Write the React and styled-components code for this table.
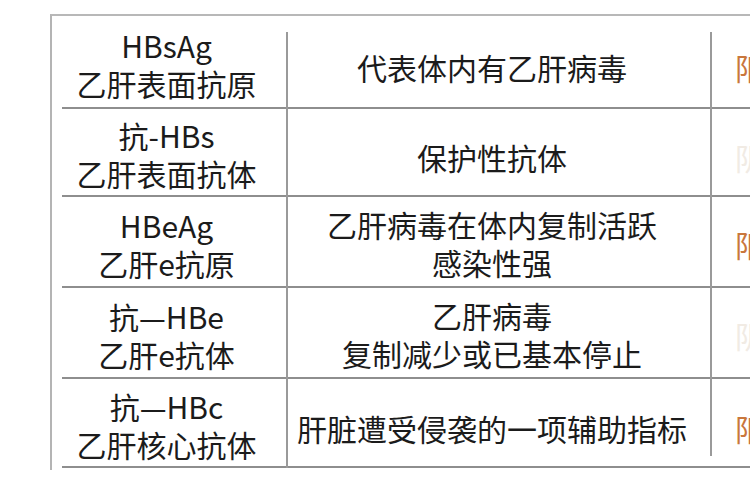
import React from "react";
import styled, { createGlobalStyle } from "styled-components";

const GlobalStyle = createGlobalStyle`
  html, body {
    margin: 0;
    padding: 0;
    background: #ffffff;
    overflow: hidden;
  }
  body {
    width: 750px;
    height: 500px;
  }
`;

const Page = styled.div`
  width: 750px;
  height: 500px;
  padding-top: 14px;
  box-sizing: border-box;
  overflow: hidden;
`;

const Frame = styled.div`
  margin-left: 50px;
  width: 760px;
  padding-left: 10px;
  border-left: 2px solid #b4b4b4;
  border-top: 2px solid #b8b8b8;
  padding-bottom: 2px;
  font-family: "Noto Sans CJK SC", "Noto Sans", sans-serif;
  color: #1b1b1b;
`;

const Table = styled.div`
  display: grid;
  grid-template-columns: 225px 424px 120px;
`;

const Cell = styled.div`
  position: relative;
  height: ${(p) => p.$h}px;
  box-sizing: border-box;
  border-bottom: 2px solid #8e8e8e;
  display: flex;
  flex-direction: column;
  align-items: center;
  justify-content: center;
  padding-top: ${(p) => p.$pt || 0}px;
  padding-right: ${(p) => p.$pr || 0}px;
  font-size: 30px;
  line-height: 38px;
  text-align: center;
  white-space: nowrap;

  ${(p) =>
    p.$divider &&
    `
    &::before {
      content: "";
      position: absolute;
      left: -1px;
      top: ${p.$first ? 16 : 0}px;
      bottom: ${p.$last && p.$short ? 10 : -2}px;
      width: 2px;
      background: #9a9a9a;
    }
  `}
`;

const Result = styled(Cell)`
  align-items: flex-start;
  padding-left: 24px;
  color: ${(p) => (p.$positive ? "#c9773c" : "#f1ebe4")};
`;

const rows = [
  {
    h: 93,
    name: ["HBsAg", "乙肝表面抗原"],
    desc: ["代表体内有乙肝病毒"],
    positive: true,
  },
  {
    h: 88,
    name: ["抗-HBs", "乙肝表面抗体"],
    desc: ["保护性抗体"],
    positive: false,
  },
  {
    h: 91,
    name: ["HBeAg", "乙肝e抗原"],
    desc: ["乙肝病毒在体内复制活跃", "感染性强"],
    positive: true,
  },
  {
    h: 91,
    name: ["抗—HBe", "乙肝e抗体"],
    desc: ["乙肝病毒", "复制减少或已基本停止"],
    positive: false,
  },
  {
    h: 89,
    name: ["抗—HBc", "乙肝核心抗体"],
    desc: ["肝脏遭受侵袭的一项辅助指标"],
    positive: true,
  },
];

export default function App() {
  return (
    <>
      <GlobalStyle />
      <Page>
        <Frame>
          <Table>
            {rows.map((row, i) => {
              const first = i === 0;
              const last = i === rows.length - 1;
              return (
                <React.Fragment key={i}>
                  <Cell $h={row.h} $pt={4} $pr={16}>
                    {row.name.map((line) => (
                      <span key={line}>{line}</span>
                    ))}
                  </Cell>
                  <Cell
                    $h={row.h}
                    $pt={row.desc.length === 1 ? 10 : 2}
                    $pr={14}
                    $divider
                    $first={first}
                    $last={last}
                  >
                    {row.desc.map((line) => (
                      <span key={line}>{line}</span>
                    ))}
                  </Cell>
                  <Result
                    $h={row.h}
                    $pt={row.desc.length === 1 ? 10 : 4}
                    $divider
                    $first={first}
                    $last={last}
                    $short
                    $positive={row.positive}
                  >
                    {row.positive ? "阳性" : "阴性"}
                  </Result>
                </React.Fragment>
              );
            })}
          </Table>
        </Frame>
      </Page>
    </>
  );
}
